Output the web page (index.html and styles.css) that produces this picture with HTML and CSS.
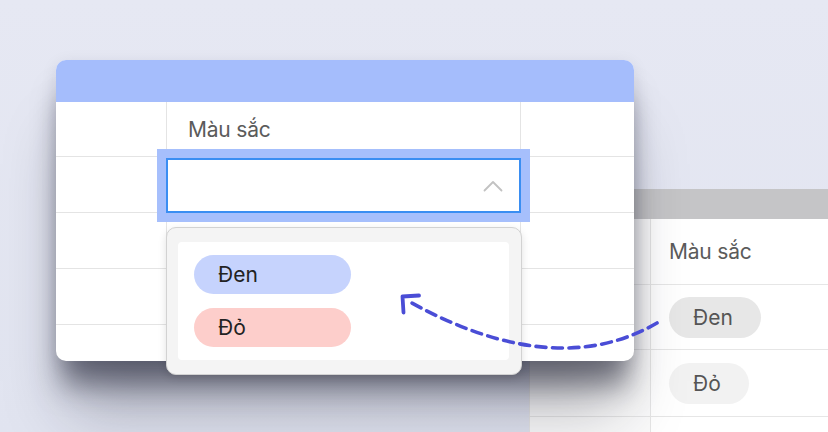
FILE: index.html
```html
<!DOCTYPE html>
<html lang="vi">
<head>
<meta charset="utf-8">
<link rel="stylesheet" href="styles.css">
</head>
<body>
<div class="stage">
  <div class="back">
    <div class="back-head"></div>
    <div class="back-grid">
      <div class="bcell bfirst"></div><div class="bcell"><span class="label">Màu sắc</span></div>
      <div class="bcell bfirst"></div><div class="bcell"><span class="tag tag-dark">Đen</span></div>
      <div class="bcell bfirst"></div><div class="bcell"><span class="tag tag-light">Đỏ</span></div>
      <div class="bcell bfirst"></div><div class="bcell"><span class="tag-stub"></span></div>
    </div>
  </div>

  <div class="card">
    <div class="card-head"></div>
    <div class="card-grid">
      <div class="cell"></div><div class="cell cell-mid"><span class="label">Màu sắc</span></div><div class="cell"></div>
      <div class="cell"></div><div class="cell cell-mid"></div><div class="cell"></div>
      <div class="cell"></div><div class="cell cell-mid"></div><div class="cell"></div>
      <div class="cell"></div><div class="cell cell-mid"></div><div class="cell"></div>
      <div class="cell cell-last"></div><div class="cell cell-mid cell-last"></div><div class="cell cell-last"></div>
    </div>
  </div>

  <div class="select">
    <div class="select-box">
      <svg class="chev" width="20" height="12" viewBox="0 0 20 12"><path d="M1.5 10.5 L10 2 L18.5 10.5" fill="none" stroke="#c2c2c2" stroke-width="1.8" stroke-linecap="round" stroke-linejoin="round"/></svg>
    </div>
  </div>

  <div class="dropdown">
    <div class="dropdown-panel">
      <div class="opt opt-blue">Đen</div>
      <div class="opt opt-red">Đỏ</div>
    </div>
  </div>

  <svg class="arrow" width="828" height="432" viewBox="0 0 828 432">
    <path d="M657 323 Q555 382 410 302" fill="none" stroke="#4a4dd6" stroke-width="3.6" stroke-dasharray="10 6.5" stroke-linecap="round"/>
    <path d="M419 295.5 L402.5 296.5 L403.5 312.5" fill="none" stroke="#4a4dd6" stroke-width="3.8" stroke-linecap="round" stroke-linejoin="round"/>
  </svg>
</div>
</body>
</html>
```

FILE: styles.css
```css
* { box-sizing: border-box; }
html, body { margin: 0; padding: 0; }
body {
  font-family: Inter, "Noto Sans", "Liberation Sans", sans-serif;
  background: #e4e6f2;
}
.stage {
  position: relative;
  width: 828px;
  height: 432px;
  overflow: hidden;
  background: linear-gradient(180deg, #e6e8f3 0%, #e1e4f0 100%);
}

/* back table */
.back {
  position: absolute;
  left: 529px;
  top: 189px;
  width: 320px;
  background: #fff;
  border-left: 1px solid #e6e6e6;
}
.back-head {
  height: 30px;
  background: #c5c5c7;
}
.back-grid {
  display: grid;
  grid-template-columns: 121px 1fr;
  grid-template-rows: 66px 65px 67px 60px;
}
.bcell {
  display: flex;
  align-items: center;
  padding-left: 18px;
  border-bottom: 1px solid #e6e6e6;
}
.bfirst {
  border-right: 1px solid #e6e6e6;
  background: #fbfbfb;
}
.label {
  font-size: 21px;
  color: #5b5b5b;
  letter-spacing: -0.2px;
}
.tag {
  display: inline-flex;
  align-items: center;
  height: 41px;
  padding: 0 24px;
  border-radius: 21px;
  font-size: 21px;
  color: #555;
}
.tag-dark { background: #e7e7e7; width: 92px; }
.tag-light { background: #f2f2f2; width: 80px; }
.tag-stub {
  display: block;
  width: 130px;
  height: 41px;
  border-radius: 21px;
  background: #f2f2f2;
  margin-top: 22px;
}

/* front card */
.card {
  position: absolute;
  left: 56px;
  top: 60px;
  width: 578px;
  height: 301px;
  background: #fff;
  border-radius: 10px;
  box-shadow:
    0 30px 28px -6px rgba(20, 22, 40, 0.5),
    0 62px 60px -12px rgba(20, 22, 40, 0.28),
    0 4px 16px rgba(30, 32, 60, 0.1);
}
.card-head {
  height: 42px;
  background: #a5bdfc;
  border-radius: 10px 10px 0 0;
}
.card-grid {
  display: grid;
  grid-template-columns: 110px 355px 113px;
  grid-template-rows: 55px 56px 56px 56px 36px;
}
.cell {
  border-bottom: 1px solid #e4e4e4;
}
.cell-mid {
  border-left: 1px solid #e4e4e4;
  border-right: 1px solid #e4e4e4;
  padding-left: 21px;
  padding-top: 15px;
}
.cell-last { border-bottom: none; }

/* focused select */
.select {
  position: absolute;
  left: 157px;
  top: 149px;
  width: 373px;
  height: 73px;
  padding: 9px;
  background: #a6bffc;
}
.select-box {
  height: 100%;
  background: #fff;
  border: 2px solid #3a8ef2;
  display: flex;
  align-items: center;
  justify-content: flex-end;
  padding-right: 16px;
}

/* dropdown */
.dropdown {
  position: absolute;
  left: 166px;
  top: 227px;
  width: 356px;
  height: 148px;
  padding: 14px 12px 14px 11px;
  background: #f4f4f4;
  border: 1px solid #d2d2d2;
  border-radius: 10px;
  box-shadow: 0 3px 8px rgba(0, 0, 0, 0.12);
}
.dropdown-panel {
  height: 100%;
  background: #fff;
  border-radius: 4px;
  padding: 13px 16px;
  display: flex;
  flex-direction: column;
  gap: 14px;
}
.opt {
  width: 157px;
  height: 39px;
  border-radius: 20px;
  padding-left: 24px;
  display: flex;
  align-items: center;
  font-size: 21px;
  color: #222;
}
.opt-blue { background: #c6d3fd; }
.opt-red { background: #fdcecb; }

.arrow {
  position: absolute;
  left: 0;
  top: 0;
  pointer-events: none;
}
```
